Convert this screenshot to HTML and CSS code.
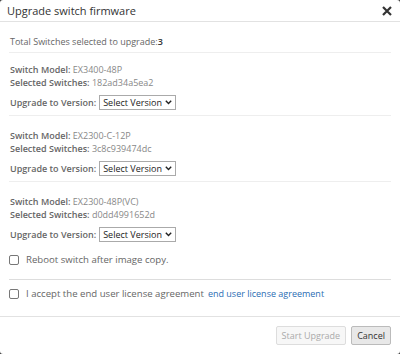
FILE: index.html
```html
<!DOCTYPE html>
<html>
<head>
<meta charset="utf-8">
<link rel="stylesheet" href="styles.css">
</head>
<body>
<div class="dialog">
  <div class="header">
    <span class="title">Upgrade switch firmware</span>
    <svg class="close" width="10" height="10" viewBox="0 0 10 10"><path d="M1 1L9 9M9 1L1 9" stroke="#333" stroke-width="2.2"/></svg>
  </div>
  <div class="body">
    <div class="total">Total Switches selected to upgrade:<b>3</b></div>
    <div class="block first">
      <div class="line"><span class="lbl">Switch Model:</span> <span class="val">EX3400-48P</span></div>
      <div class="line"><span class="lbl">Selected Switches:</span> <span class="val">182ad34a5ea2</span></div>
      <div class="ver"><span class="lbl">Upgrade to Version:</span><div class="select">Select Version<svg width="7" height="5" viewBox="0 0 7 5"><path d="M0.8 0.8L3.5 3.6L6.2 0.8" fill="none" stroke="#222" stroke-width="1.4"/></svg></div></div>
    </div>
    <div class="block">
      <div class="line"><span class="lbl">Switch Model:</span> <span class="val">EX2300-C-12P</span></div>
      <div class="line"><span class="lbl">Selected Switches:</span> <span class="val">3c8c939474dc</span></div>
      <div class="ver"><span class="lbl">Upgrade to Version:</span><div class="select">Select Version<svg width="7" height="5" viewBox="0 0 7 5"><path d="M0.8 0.8L3.5 3.6L6.2 0.8" fill="none" stroke="#222" stroke-width="1.4"/></svg></div></div>
    </div>
    <div class="block last">
      <div class="line"><span class="lbl">Switch Model:</span> <span class="val">EX2300-48P(VC)</span></div>
      <div class="line"><span class="lbl">Selected Switches:</span> <span class="val">d0dd4991652d</span></div>
      <div class="ver"><span class="lbl">Upgrade to Version:</span><div class="select">Select Version<svg width="7" height="5" viewBox="0 0 7 5"><path d="M0.8 0.8L3.5 3.6L6.2 0.8" fill="none" stroke="#222" stroke-width="1.4"/></svg></div></div>
    </div>
    <div class="check reboot"><span class="box"></span><span class="ctext">Reboot switch after image copy.</span></div>
    <div class="check license"><span class="box"></span><span class="ctext">I accept the end user license agreement</span><a class="link">end user license agreement</a></div>
  </div>
  <div class="footer">
    <button class="btn disabled">Start Upgrade</button>
    <button class="btn cancel">Cancel</button>
  </div>
</div>
</body>
</html>
```
FILE: styles.css
```css
html, body { margin: 0; padding: 0; }
body {
  width: 400px; height: 354px;
  background: #3a3a3a;
  font-family: "Open Sans", "Liberation Sans", sans-serif;
  font-size: 9px;
  color: #666;
}
.dialog {
  width: 400px; height: 354px;
  background: #fff;
  border-radius: 3px;
  display: flex; flex-direction: column;
  box-sizing: border-box;
}
.header {
  height: 22px;
  border-bottom: 1px solid #e2e2e2;
  display: flex; align-items: center; justify-content: space-between;
  padding: 0 8px 0 7px;
  box-sizing: border-box;
}
.title { font-size: 11px; color: #333; font-weight: 500; }
.close { display: block; }
.body { flex: 1; padding: 0 9px; }
.total { padding: 13px 1px 4px; line-height: 13px; border-bottom: 1px solid #eee; }
.total b { color: #333; font-weight: 600; }
.block { padding: 13px 1px 4px; border-bottom: 1px solid #eee; }
.block.first { padding-top: 10px; }
.block.last { border-bottom: none; }
.line { line-height: 13px; }
.lbl { font-weight: 600; color: #666; }
.val { color: #888; }
.ver { display: flex; align-items: center; gap: 3px; margin-top: 4px; height: 18px; }
.select {
  display: flex; align-items: center; gap: 3px;
  height: 15px; padding: 0 3px;
  border: 1px solid #aaa;
  color: #222;
  box-sizing: border-box;
}
.check { display: flex; align-items: center; line-height: 13px; }
.box { width: 10px; height: 10px; border: 1px solid #777; border-radius: 2px; box-sizing: border-box; margin-right: 7px; }
.ctext { font-size: 9.6px; }
.reboot { padding: 6px 0 13px; border-bottom: 1px solid #ddd; }
.license { padding: 7px 0; }
.link { color: #2a6db3; margin-left: 4px; }
.footer {
  height: 38px;
  border-top: 1px solid #e2e2e2;
  display: flex; align-items: center; justify-content: flex-end; gap: 5px;
  padding: 0 9px;
  box-sizing: border-box;
}
.btn {
  font-family: inherit; font-size: 9px;
  height: 19px; padding: 0 5px;
  border-radius: 2px;
}
.disabled { background: #f7f7f7; border: 1px solid #ddd; color: #aaa; }
.cancel { background: #e8e8e8; border: 1px solid #bbb; color: #333; }
```
